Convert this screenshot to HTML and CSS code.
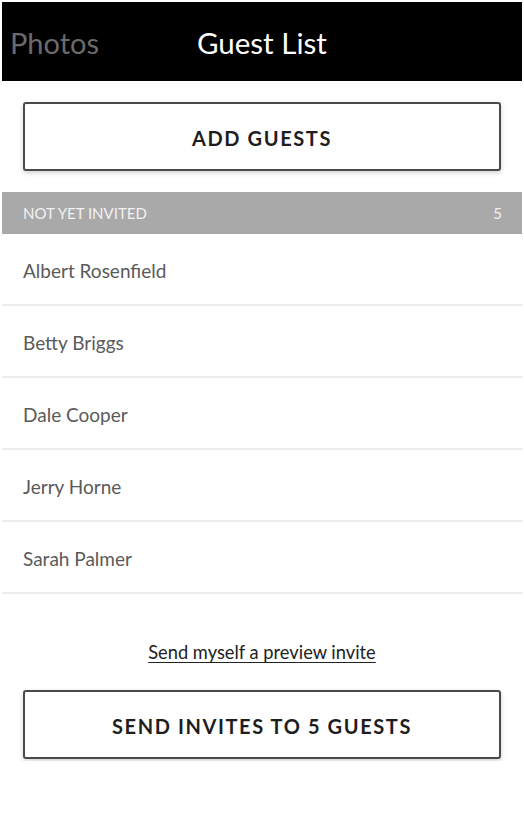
FILE: index.html
```html
<!DOCTYPE html>
<html>
<head>
<meta charset="utf-8">
<link rel="stylesheet" href="styles.css">
</head>
<body>
<div class="page">
  <header class="topbar">
    <span class="back">Photos</span>
    <h1 class="title">Guest List</h1>
  </header>
  <div class="btn-wrap top">
    <button class="btn">ADD GUESTS</button>
  </div>
  <div class="section-head">
    <span>NOT YET INVITED</span>
    <span>5</span>
  </div>
  <ul class="guests">
    <li>Albert Rosenfield</li>
    <li>Betty Briggs</li>
    <li>Dale Cooper</li>
    <li>Jerry Horne</li>
    <li>Sarah Palmer</li>
  </ul>
  <div class="preview"><a href="#">Send myself a preview invite</a></div>
  <div class="btn-wrap">
    <button class="btn">SEND INVITES TO 5 GUESTS</button>
  </div>
</div>
</body>
</html>
```

FILE: styles.css
```css
* { box-sizing: border-box; }
html, body { margin: 0; padding: 0; background: #fff; }
body { padding: 2px; font-family: Lato, "Open Sans", sans-serif; }
.page { width: 520px; }

.topbar {
  height: 79px;
  background: #000;
  display: flex;
  align-items: center;
  padding-left: 8px;
}
.back {
  color: #6b6b6b;
  font-size: 29px;
  font-weight: 400;
  padding-top: 2px;
}
.title {
  margin: 0 0 0 98px;
  color: #fff;
  font-size: 29.5px;
  font-weight: 400;
  padding-top: 2px;
}

.btn-wrap { padding: 0 21px; }
.btn-wrap.top { padding-top: 21px; padding-bottom: 21px; }
.btn {
  display: block;
  width: 100%;
  height: 69px;
  background: #fff;
  border: 2px solid #4a4a4a;
  border-radius: 3px;
  box-shadow: 0 2px 5px rgba(0,0,0,0.18);
  font-family: Lato, sans-serif;
  font-weight: 700;
  font-size: 20px;
  letter-spacing: 1.6px;
  color: #1e1e1e;
  padding: 3px 0 0;
}

.section-head {
  height: 42px;
  background: #a9a9a9;
  color: #f2f2f2;
  font-size: 15px;
  display: flex;
  align-items: center;
  justify-content: space-between;
  padding: 0 20px 0 21px;
}

.guests { list-style: none; margin: 0; padding: 0; }
.guests li {
  height: 72px;
  border-bottom: 2px solid #ececec;
  display: flex;
  align-items: center;
  padding-left: 21px;
  padding-top: 2px;
  font-size: 19px;
  color: #5a5a5a;
}

.preview {
  text-align: center;
  padding-top: 47px;
  height: 96px;
}
.preview a {
  color: #222;
  font-size: 18.3px;
  text-decoration: underline;
  text-underline-offset: 3px;
  text-decoration-thickness: 1px;
}
```
